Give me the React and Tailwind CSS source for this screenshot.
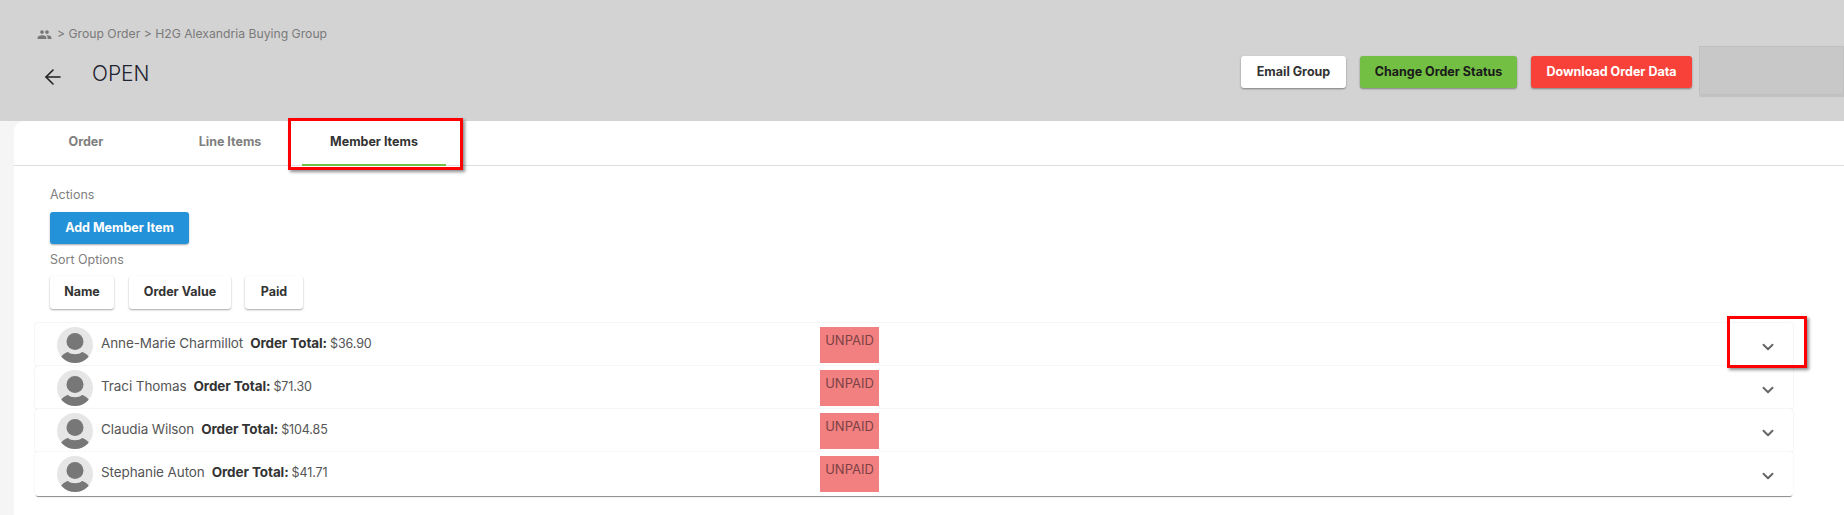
import React from 'react';
import { ArrowLeft, ChevronDown } from 'lucide-react';
import { MdPeople } from 'react-icons/md';

const FONT = "font-['Inter','Liberation_Sans',sans-serif]";

const MEMBERS = [
    { name: 'Anne-Marie Charmillot', total: '$36.90' },
    { name: 'Traci Thomas', total: '$71.30' },
    { name: 'Claudia Wilson', total: '$104.85' },
    { name: 'Stephanie Auton', total: '$41.71' },
];

const Avatar = () => (
    <svg viewBox="0 0 36 36" className="w-9 h-9 shrink-0">
        <circle cx="18" cy="18" r="18" fill="#e6e6e6" />
        <clipPath id="avatar-clip"><circle cx="18" cy="18" r="18" /></clipPath>
        <g clipPath="url(#avatar-clip)" fill="#777777">
            <circle cx="18" cy="14.5" r="8.5" />
            <path d="M2 33 C5 27 10 25 11 25 C14 28 22 28 25 25 C26 25 31 27 34 33 L34 38 L2 38 Z" />
        </g>
    </svg>
);

const MemberRow = ({ name, total, last }) => (
    <div className={`flex items-center pl-[22px] pr-[16px] bg-white rounded-[3px] ${last ? 'h-[44px] pb-px shadow-[0_2px_1px_-1px_rgba(0,0,0,0.45),0_0_2px_rgba(0,0,0,0.1)]' : 'h-[43px] shadow-[0_0_2px_rgba(0,0,0,0.14)]'}`}>
        <Avatar />
        <div className="w-[727px] pl-[8px] pb-[3px] text-[13.5px] tracking-[-0.1px] text-[#555] whitespace-nowrap">
            {name}
            <span className="ml-[7px] font-bold text-[#333]">Order Total:</span>
            <span className="ml-[3px] text-[12.5px]">{total}</span>
        </div>
        <div className="w-[59px] h-[36px] bg-[#f28080] text-[#7c4245] text-[13px] text-center pt-[4px]">UNPAID</div>
        <ChevronDown className="ml-auto mt-[5px] w-[18px] h-[18px] text-[#666]" strokeWidth={2.6} />
    </div>
);

const ActionButton = ({ className, children }) => (
    <button className={`h-[32px] rounded-[3px] text-[12.5px] font-bold shadow-[0_1px_2px_rgba(0,0,0,0.4)] ${className}`}>
        {children}
    </button>
);

export default function App() {
    return (
        <div className={`relative w-full h-[515px] overflow-hidden bg-[#f5f5f5] ${FONT}`}>
            {/* Header */}
            <div className="relative h-[121px] bg-[#d3d3d3] pl-[37px] pt-[25px]">
                <div className="flex items-center text-[12.2px] text-[#7a7a7a]">
                    <MdPeople className="w-[15px] h-[15px] text-[#777]" />
                    <span className="ml-[5px]">&gt; Group Order &gt; H2G Alexandria Buying Group</span>
                </div>
                <div className="flex items-center mt-[16px]">
                    <ArrowLeft className="ml-[4px] mt-[6px] w-[24px] h-[24px] text-[#222]" strokeWidth={1.6} />
                    <h1 className="ml-[27px] text-[21px] leading-[26px] font-light text-[#1f2430]">OPEN</h1>
                </div>
                <div className="absolute left-[1241px] top-[56px] flex">
                    <ActionButton className="w-[105px] bg-white text-[#333]">Email Group</ActionButton>
                    <ActionButton className="ml-[14px] w-[157px] bg-[#72bf44] text-[#1a1a1a]">Change Order Status</ActionButton>
                    <ActionButton className="ml-[14px] w-[161px] bg-[#f84239] text-white">Download Order Data</ActionButton>
                </div>
                <div className="absolute left-[1699px] top-[46px] right-0 h-[49px] bg-[#c8c8c8] border border-[#c0c0c0] shadow-[1px_2px_1px_rgba(0,0,0,0.08)]" />
            </div>

            {/* Card */}
            <div className="ml-[14px] h-[394px] bg-white rounded-tl-[10px]">
                <div className="h-[45px] flex border-b border-[#dedede] text-[12.5px] font-bold">
                    <div className="w-[144px] pt-[12px] text-center text-[#808080]">Order</div>
                    <div className="w-[144px] pt-[12px] text-center text-[#808080]">Line Items</div>
                    <div className="w-[144px] h-[45px] pt-[12px] text-center text-[#333] border-b-2 border-[#72bf44]">Member Items</div>
                </div>

                <div className="pl-[36px] pt-[21px] text-[12.5px] text-[#808080] leading-[16px]">Actions</div>
                <div className="pl-[36px] mt-[9px]">
                    <button className="w-[139px] h-[32px] rounded-[3px] bg-[#2492d8] text-white text-[12.5px] font-bold shadow-[0_1px_2px_rgba(0,0,0,0.35)]">Add Member Item</button>
                </div>
                <div className="pl-[36px] mt-[8px] text-[12.5px] text-[#808080] leading-[16px]">Sort Options</div>
                <div className="pl-[36px] mt-[8px] flex text-[12.5px] font-bold text-[#333]">
                    <button className="w-[64px] h-[33px] rounded-[3px] bg-white font-bold shadow-[0_1px_2px_rgba(0,0,0,0.35)]">Name</button>
                    <button className="ml-[15px] w-[102px] h-[33px] rounded-[3px] bg-white font-bold shadow-[0_1px_2px_rgba(0,0,0,0.35)]">Order Value</button>
                    <button className="ml-[14px] w-[58px] h-[33px] rounded-[3px] bg-white font-bold shadow-[0_1px_2px_rgba(0,0,0,0.35)]">Paid</button>
                </div>

                <div className="ml-[21px] w-[1758px] mt-[14px]">
                    {MEMBERS.map((m, i) => (
                        <MemberRow key={m.name} name={m.name} total={m.total} last={i === MEMBERS.length - 1} />
                    ))}
                </div>
            </div>

            {/* Red annotation boxes */}
            <div className="absolute left-[288px] top-[118px] w-[175px] h-[52px] border-[3px] border-[#ff0000] shadow-[2px_2px_3px_rgba(0,0,0,0.45)]" />
            <div className="absolute left-[1727px] top-[316px] w-[80px] h-[52px] border-[3px] border-[#ff0000] shadow-[2px_2px_3px_rgba(0,0,0,0.45)]" />
        </div>
    );
}
